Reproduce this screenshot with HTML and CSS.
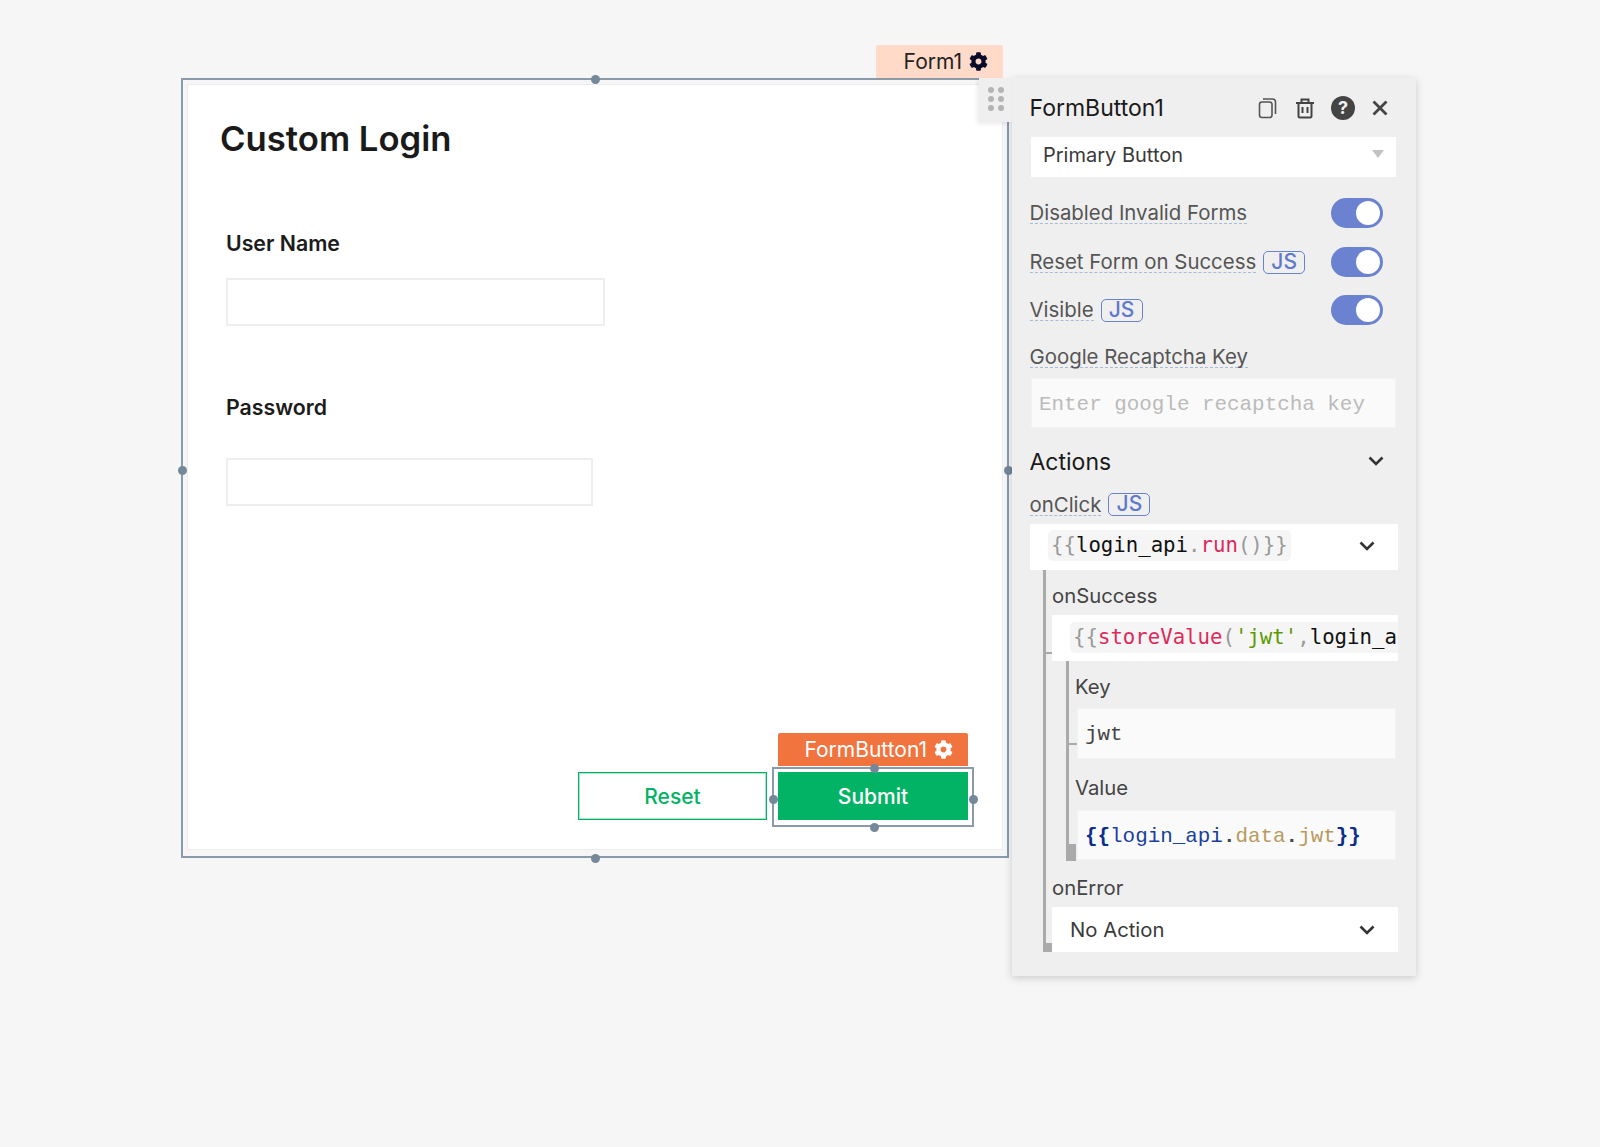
FILE: index.html
```html
<!DOCTYPE html>
<html>
<head>
<meta charset="utf-8">
<title>Custom Login</title>
<link rel="stylesheet" href="styles.css">
</head>
<body>
<svg class="defs" width="0" height="0">
	<symbol id="cog" viewBox="0 0 512 512"><path fill="currentColor" d="M487.4 315.7l-42.6-24.6c4.3-23.2 4.3-47 0-70.2l42.6-24.6c4.9-2.8 7.1-8.6 5.5-14-11.1-35.6-30-67.8-54.7-94.6-3.8-4.1-10-5.1-14.8-2.3L380.8 110c-17.9-15.4-38.5-27.3-60.8-35.1V25.8c0-5.6-3.9-10.5-9.4-11.7-36.7-8.2-74.3-7.8-109.2 0-5.5 1.2-9.4 6.1-9.4 11.7V75c-22.2 7.9-42.8 19.8-60.8 35.1L88.7 85.5c-4.9-2.8-11-1.9-14.8 2.3-24.7 26.7-43.6 58.9-54.7 94.6-1.7 5.4.6 11.2 5.5 14L67.3 221c-4.3 23.2-4.3 47 0 70.2l-42.6 24.6c-4.9 2.8-7.1 8.6-5.5 14 11.1 35.6 30 67.8 54.7 94.6 3.8 4.1 10 5.1 14.8 2.3l42.6-24.6c17.9 15.4 38.5 27.3 60.8 35.1v49.2c0 5.6 3.9 10.5 9.4 11.7 36.7 8.2 74.3 7.8 109.2 0 5.5-1.2 9.4-6.1 9.4-11.7v-49.2c22.2-7.9 42.8-19.8 60.8-35.1l42.6 24.6c4.9 2.8 11 1.9 14.8-2.3 24.7-26.7 43.6-58.9 54.7-94.6 1.5-5.5-.7-11.3-5.6-14.1zM256 336c-44.1 0-80-35.9-80-80s35.9-80 80-80 80 35.9 80 80-35.9 80-80 80z"/></symbol>
	<symbol id="chevron" viewBox="0 0 16 10"><path fill="none" stroke="currentColor" stroke-width="2.6" d="M1.5 1.5L8 8l6.5-6.5"/></symbol>
</svg>
<div class="stage">
	<div class="form-frame">
		<div class="form-tag">Form1 <svg class="tag-cog"><use href="#cog"/></svg></div>
		<span class="dot dot-top"></span>
		<span class="dot dot-left"></span>
		<span class="dot dot-right"></span>
		<span class="dot dot-bottom"></span>
		<div class="form-card">
			<h1 class="form-title">Custom Login</h1>
			<label class="field-label label-user">User Name</label>
			<div class="text-box box-user"></div>
			<label class="field-label label-pass">Password</label>
			<div class="text-box box-pass"></div>
			<div class="button-row">
				<button class="btn btn-reset">Reset</button>
				<div class="btn-wrap">
					<div class="widget-tag">FormButton1 <svg class="tag-cog"><use href="#cog"/></svg></div>
					<div class="selection">
						<span class="dot dot-top"></span>
						<span class="dot dot-left"></span>
						<span class="dot dot-right"></span>
						<span class="dot dot-bottom"></span>
					</div>
					<button class="btn btn-submit">Submit</button>
				</div>
			</div>
		</div>
	</div>

	<div class="panel">
		<div class="drag-handle">
			<i></i><i></i><i></i><i></i><i></i><i></i>
		</div>
		<div class="panel-header">
			<span class="panel-title">FormButton1</span>
			<div class="panel-icons">
				<svg class="icon" width="20" height="22" viewBox="0 0 20 22"><rect x="1.5" y="5" width="12.5" height="15.5" rx="2.5" fill="none" stroke="#555" stroke-width="1.6"/><path d="M5 2h9.5a3 3 0 0 1 3 3v12" fill="none" stroke="#555" stroke-width="1.6"/></svg>
				<svg class="icon" width="20" height="22" viewBox="0 0 20 22"><path d="M1 6h18M6.5 6V2.500h7V6M3.500 6v13a1.500 1.500 0 0 0 1.500 1.500h10a1.500 1.500 0 0 0 1.500-1.500V6M7.500 10v6M12.500 10v6" fill="none" stroke="#444" stroke-width="2"/></svg>
				<span class="help">?</span>
				<svg class="icon" width="16" height="16" viewBox="0 0 16 16"><path d="M1.500 1.500l13 13M14.500 1.500l-13 13" fill="none" stroke="#444" stroke-width="2.800"/></svg>
			</div>
		</div>
		<div class="select-box">Primary Button<span class="caret"></span></div>

		<div class="toggle-row row-first"><span class="prop">Disabled Invalid Forms</span><span class="toggle"></span></div>
		<div class="toggle-row row-second"><span class="prop">Reset Form on Success</span><span class="js-badge">JS</span><span class="toggle"></span></div>
		<div class="toggle-row row-third"><span class="prop">Visible</span><span class="js-badge">JS</span><span class="toggle"></span></div>

		<div class="label-row recaptcha-label"><span class="prop">Google Recaptcha Key</span></div>
		<div class="code-input recaptcha-input placeholder">Enter google recaptcha key</div>

		<div class="section-head">Actions<svg class="chevron"><use href="#chevron"/></svg></div>

		<div class="label-row onclick-label"><span class="prop">onClick</span><span class="js-badge">JS</span></div>
		<div class="action-box onclick-box">
			<span class="chip"><span class="c-brace">{{</span>login_api<span class="c-brace">.</span><span class="c-red">run</span><span class="c-brace">()}}</span></span>
			<svg class="chevron"><use href="#chevron"/></svg>
		</div>

		<div class="tree tree-outer">
			<div class="tree-label">onSuccess</div>
			<div class="action-box success-box">
				<span class="chip chip-wide"><span class="c-brace">{{</span><span class="c-red">storeValue</span><span class="c-brace">(</span><span class="c-green">'jwt'</span><span class="c-brace">,</span>login_a</span>
			</div>
			<div class="tree tree-inner">
				<div class="tree-label">Key</div>
				<div class="code-input inner-input key-input">jwt</div>
				<div class="tree-label value-label">Value</div>
				<div class="code-input inner-input value-input"><span class="v-brace">{{</span><span class="v-name">login_api</span>.<span class="v-prop">data</span>.<span class="v-prop">jwt</span><span class="v-brace">}}</span></div>
			</div>
			<div class="tree-label error-label">onError</div>
			<div class="action-box error-box">No Action<svg class="chevron"><use href="#chevron"/></svg></div>
		</div>
	</div>
</div>
</body>
</html>
```

FILE: styles.css
```css
* {
  box-sizing: border-box;
}

body {
  margin: 0;
  background: #f6f6f6;
  font-family: "Inter", "Liberation Sans", sans-serif;
  color: #444;
}

.defs {
  position: absolute;
}

.stage {
  display: flex;
  align-items: flex-start;
  height: 1147px;
  padding: 78px 0 0 181px;
  overflow: hidden;
}

/* form widget */
.form-frame {
  position: relative;
  width: 828px;
  height: 780px;
  padding: 4px 4px 6px 4px;
  border: 2px solid #8a9aaa;
  flex: none;
}

.form-card {
  display: flex;
  flex-direction: column;
  height: 100%;
  background: #fff;
  border: 1px solid #ececec;
  padding: 0 34px 0 38px;
}

.form-title {
  margin: 31px 0 0 -6px;
  font-size: 34.7px;
  line-height: 44px;
  font-weight: 600;
  color: #1a1a1a;
}

.field-label {
  display: block;
  font-size: 21.3px;
  line-height: 26px;
  font-weight: 600;
  color: #1c1c1c;
}

.label-user {
  margin-top: 70px;
}

.label-pass {
  margin-top: 68px;
}

.text-box {
  height: 48px;
  background: #fff;
  border: 2px solid #eeeeee;
}

.box-user {
  width: 379px;
  margin-top: 22px;
}

.box-pass {
  width: 367px;
  margin-top: 38px;
}

.button-row {
  display: flex;
  justify-content: flex-end;
  gap: 11px;
  margin-top: auto;
  padding-bottom: 29px;
}

.btn {
  display: block;
  height: 48px;
  padding: 0;
  border-radius: 0;
  font-family: inherit;
  font-size: 21px;
  font-weight: 500;
}

.btn-reset {
  width: 189px;
  background: #fff;
  border: 1px solid #03b365;
  box-shadow: inset 0 0 0 1px rgba(3, 179, 101, 0.35);
  color: #03b365;
}

.btn-submit {
  width: 190px;
  background: #03b365;
  border: 0;
  color: #fff;
}

.btn-wrap {
  position: relative;
}

.selection {
  position: absolute;
  left: -6px;
  right: -6px;
  top: -5px;
  bottom: -7px;
  border: 2px solid #8a9aaa;
  z-index: 1;
}

.dot {
  position: absolute;
  width: 9px;
  height: 9px;
  border-radius: 50%;
  background: #748899;
  z-index: 2;
}

.dot-top {
  top: -5px;
  left: 50%;
  margin-left: -4px;
}

.dot-bottom {
  bottom: -7px;
  left: 50%;
  margin-left: -4px;
}

.dot-left {
  left: -5px;
  top: 50%;
  margin-top: -2px;
}

.dot-right {
  right: -6px;
  top: 50%;
  margin-top: -2px;
}

.selection .dot-top,
.selection .dot-bottom {
  margin-left: -3px;
}

.form-tag,
.widget-tag {
  position: absolute;
  display: flex;
  align-items: center;
  justify-content: flex-end;
  height: 33px;
  border-radius: 2px 2px 0 0;
  font-size: 21px;
  white-space: pre;
}

.form-tag {
  top: -35px;
  right: 4px;
  width: 127px;
  padding-right: 15px;
  background: #ffdac9;
  color: #222;
}

.widget-tag {
  top: -39px;
  left: 0;
  width: 190px;
  padding-right: 15px;
  background: #f1743f;
  color: #fff;
}

.tag-cog {
  width: 19px;
  height: 19px;
  margin-left: 1px;
}

.form-tag .tag-cog {
  color: #0a0a2a;
}

/* property pane */
.panel {
  position: relative;
  width: 404px;
  margin-left: 3px;
  padding: 0 18px 24px 18px;
  background: #efefef;
  box-shadow: 0 2px 8px rgba(0, 0, 0, 0.18);
  flex: none;
  z-index: 3;
}

.drag-handle {
  position: absolute;
  left: -33px;
  top: 0;
  width: 33px;
  height: 44px;
  padding: 9px 0 0 9px;
  display: grid;
  grid-template-columns: 6px 6px;
  grid-auto-rows: 6px;
  gap: 3px 4px;
  background: #efefef;
  box-shadow: -2px 2px 4px rgba(0, 0, 0, 0.08);
}

.drag-handle i {
  border-radius: 50%;
  background: #b4b4b4;
}

.panel-header {
  display: flex;
  align-items: center;
  justify-content: space-between;
  height: 59px;
}

.panel-title {
  margin-left: -0.5px;
  font-size: 23px;
  line-height: 30px;
  margin-top: 1px;
  color: #1a1a1a;
}

.panel-icons {
  display: flex;
  align-items: center;
  margin-right: 10px;
  gap: 17px;
}

.icon {
  display: block;
}

.help {
  width: 24px;
  height: 24px;
  margin-left: -1px;
  border-radius: 50%;
  background: #444;
  color: #f0f0f0;
  font-size: 18px;
  font-weight: 700;
  line-height: 24px;
  text-align: center;
}

.select-box {
  position: relative;
  width: 365px;
  height: 40px;
  margin-left: 1px;
  padding-left: 12px;
  background: #fff;
  font-size: 20px;
  line-height: 36px;
  color: #3a3a3a;
}

.caret {
  position: absolute;
  right: 12px;
  top: 13px;
  border-style: solid;
  border-width: 8px 6px 0 6px;
  border-color: #c2c2c2 transparent transparent transparent;
}

.toggle-row,
.label-row {
  display: flex;
  align-items: center;
  font-size: 20.4px;
  color: #555;
}

.toggle-row {
  height: 30px;
}

.row-first {
  margin-top: 21px;
}

.row-second {
  margin-top: 19px;
}

.row-third {
  margin-top: 18px;
}

.prop {
  margin-left: -0.5px;
  line-height: 21px;
  border-bottom: 1px dashed #a8bcd6;
}

.js-badge {
  width: 42px;
  height: 23px;
  margin-left: 7px;
  border: 1.5px solid #6a82cf;
  border-radius: 5px;
  color: #5f79cc;
  font-size: 21px;
  font-weight: 500;
  line-height: 20px;
  text-align: center;
}

.toggle {
  position: relative;
  width: 52px;
  height: 30px;
  margin-left: auto;
  margin-right: 15px;
  border-radius: 15px;
  background: #6a82cf;
}

.toggle::after {
  content: "";
  position: absolute;
  right: 3px;
  top: 3px;
  width: 24px;
  height: 24px;
  border-radius: 50%;
  background: #fff;
}

.label-row {
  height: 22px;
}

.recaptcha-label {
  margin-top: 21px;
}

.code-input {
  height: 50px;
  background: #fafafa;
  border: 1px solid #f3f3f3;
  font-family: "Liberation Mono", monospace;
  font-size: 20.9px;
  line-height: 52px;
}

.recaptcha-input {
  width: 365px;
  margin: 10px 0 0 1px;
  padding-left: 7px;
}

.placeholder {
  color: #bbb;
}

.section-head {
  display: flex;
  align-items: center;
  justify-content: space-between;
  height: 30px;
  margin-top: 19px;
  padding-right: 14px;
  margin-left: -0.5px;
  font-size: 23px;
  color: #1a1a1a;
}

.section-head .chevron {
  margin-top: -2px;
}

.chevron {
  width: 16px;
  height: 10px;
  color: #333;
  flex: none;
}

.onclick-label {
  height: 23px;
  margin-top: 16px;
}

.action-box {
  display: flex;
  align-items: center;
  justify-content: space-between;
  height: 46px;
  margin-top: 8px;
  padding-right: 23px;
  background: #fff;
  overflow: hidden;
  white-space: nowrap;
}

.onclick-box {
  padding-left: 18px;
}

.onclick-box .chevron {
  margin-bottom: 3px;
}

.chip {
  height: 31px;
  margin-bottom: 3px;
  padding: 0 3px;
  border-radius: 5px;
  background: #f5f5f5;
  font-family: "DejaVu Sans Mono", monospace;
  font-size: 20.7px;
  line-height: 30px;
  color: #111;
}

.chip-wide {
  flex: 1;
  margin-right: -23px;
  margin-bottom: 2px;
  border-radius: 5px 0 0 5px;
}

.c-brace {
  color: #999;
}

.c-red {
  color: #dd2a5b;
}

.c-green {
  color: #5c9a00;
}

.tree {
  position: relative;
  padding-top: 15px;
  border-left: 3px solid #aaaaaa;
}

.tree-outer {
  margin-left: 13px;
  padding-left: 6px;
}

.tree-outer::after {
  content: "";
  position: absolute;
  left: -3px;
  bottom: 0;
  width: 9px;
  height: 9px;
  background: #aaaaaa;
}

.tree-outer::before {
  content: "";
  position: absolute;
  left: 0;
  top: 82px;
  width: 6px;
  height: 2px;
  background: #aaaaaa;
}

.tree-inner {
  margin-left: 14px;
  padding-left: 6px;
  height: 200px;
}

.tree-inner::after {
  content: "";
  position: absolute;
  left: -3px;
  bottom: 0;
  width: 10px;
  height: 17px;
  background: #aaaaaa;
}

.tree-inner::before {
  content: "";
  position: absolute;
  left: 0;
  top: 82px;
  width: 8px;
  height: 2px;
  background: #aaaaaa;
}

.tree-label {
  height: 22px;
  font-size: 20.3px;
  line-height: 22px;
  color: #444;
}

.success-box {
  padding-left: 18px;
}

.inner-input {
  position: relative;
  width: 319px;
  margin: 10px 0 0 2px;
  padding-left: 7px;
}

.key-input {
  height: 51px;
  line-height: 52px;
  color: #444;
}

.value-label {
  margin-top: 18px;
}

.value-input {
  margin-top: 11px;
  font-weight: 700;
  color: #444;
}

.v-brace {
  color: #0b2f8a;
}

.v-name {
  color: #1a3f9c;
  font-weight: 400;
}

.v-prop {
  color: #b89a60;
  font-weight: 400;
}

.error-label {
  margin-top: 16px;
}

.error-box {
  height: 45px;
  padding-left: 18px;
  font-size: 20.3px;
  color: #3a3a3a;
}
```
